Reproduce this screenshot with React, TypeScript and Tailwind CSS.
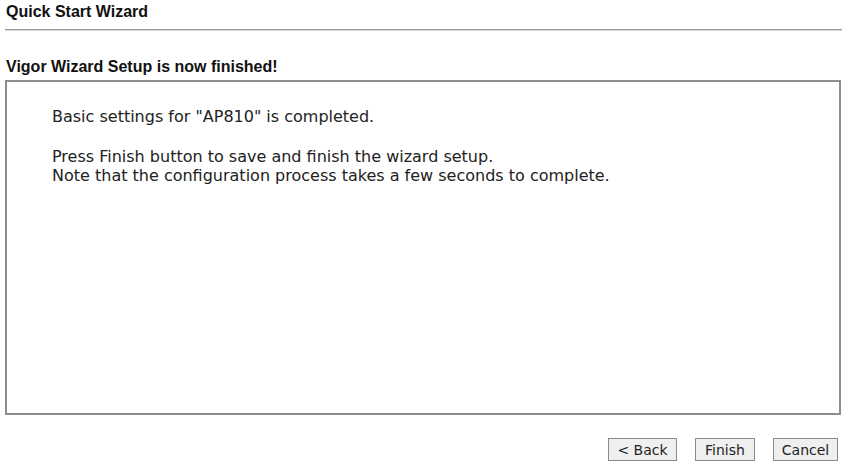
export default function App() {
  const body = "font-['DejaVu_Sans',Verdana,sans-serif] text-[16px] text-[#222]";
  const btn =
    "h-[23px] border border-[#8a8a8a] bg-[#efefef] px-1 font-['DejaVu_Sans',Tahoma,sans-serif] text-[14px] text-[#222] leading-none";

  return (
    <div className="h-[475px] w-[855px] bg-white px-[5px] pt-[3px] font-['Liberation_Sans',Arial,sans-serif]">
      <div className="mr-[8px]">
        <div className="h-[18px] pl-px text-[16px] leading-[18px] font-bold text-[#111]">
          Quick Start Wizard
        </div>
        <div className="mt-[8px] h-[2px] border-t border-[#9a9a9a] bg-[#d6d6d6]" />
      </div>

      <div className="mt-[27px] h-[18px] pl-px text-[16px] font-bold leading-[18px] text-[#111]">
        Vigor Wizard Setup is now finished!
      </div>

      <div className={`mt-[4px] mr-[9px] h-[335px] border-2 border-[#8d8d8d] pl-[45px] pt-[25px] ${body}`}>
        <p className="leading-[19px]">Basic settings for "AP810" is completed.</p>
        <p className="mt-[21px] leading-[19px]">Press Finish button to save and finish the wizard setup.</p>
        <p className="leading-[19px]">Note that the configuration process takes a few seconds to complete.</p>
      </div>

      <div className="mt-[23px] mr-[12px] flex justify-end gap-[18px]">
        <button className={`${btn} w-[69px]`}>&lt; Back</button>
        <button className={`${btn} w-[60px]`}>Finish</button>
        <button className={`${btn} w-[65px]`}>Cancel</button>
      </div>
    </div>
  );
}
